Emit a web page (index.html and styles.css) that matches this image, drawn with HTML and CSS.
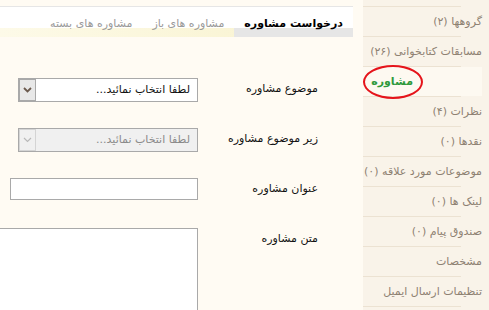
FILE: index.html
```html
<!DOCTYPE html>
<html lang="fa" dir="rtl">
<head>
<meta charset="utf-8">
<title>درخواست مشاوره</title>
<link rel="stylesheet" href="styles.css">
</head>
<body>
<div class="page">
  <aside class="sidebar">
    <div class="side-top"></div>
    <ul class="menu">
      <li class="item">گروهها (۲)</li>
      <li class="item">مسابقات کتابخوانی (۲۶)</li>
      <li class="item active"><span class="mark"></span>مشاوره</li>
      <li class="item">نظرات (۴)</li>
      <li class="item">نقدها (۰)</li>
      <li class="item">موضوعات مورد علاقه (۰)</li>
      <li class="item">لینک ها (۰)</li>
      <li class="item">صندوق پیام (۰)</li>
      <li class="item">مشخصات</li>
      <li class="item">تنظیمات ارسال ایمیل</li>
    </ul>
  </aside>
  <main class="main">
    <div class="tabs">
      <div class="tab active">درخواست مشاوره</div>
      <div class="tab">مشاوره های باز</div>
      <div class="tab">مشاوره های بسته</div>
    </div>
    <div class="form">
      <div class="row">
        <div class="label">موضوع مشاوره</div>
        <div class="select">
          <span class="select-text">لطفا انتخاب نمائید...</span>
          <span class="select-btn"><svg width="9" height="6" viewBox="0 0 9 6"><path d="M1 1 L4.5 4.5 L8 1" fill="none" stroke="currentColor" stroke-width="1.8"/></svg></span>
        </div>
      </div>
      <div class="row">
        <div class="label">زیر موضوع مشاوره</div>
        <div class="select disabled">
          <span class="select-text">لطفا انتخاب نمائید...</span>
          <span class="select-btn"><svg width="9" height="6" viewBox="0 0 9 6"><path d="M1 1 L4.5 4.5 L8 1" fill="none" stroke="currentColor" stroke-width="1.2"/></svg></span>
        </div>
      </div>
      <div class="row">
        <div class="label">عنوان مشاوره</div>
        <div class="input"></div>
      </div>
      <div class="row">
        <div class="label">متن مشاوره</div>
        <div class="textarea"></div>
      </div>
    </div>
  </main>
</div>
</body>
</html>
```
FILE: styles.css
```css
* { box-sizing: border-box; }
html, body {
  margin: 0;
  padding: 0;
}
body {
  width: 489px;
  height: 310px;
  overflow: hidden;
  background: #fffbf3;
  font-family: "DejaVu Sans", sans-serif;
  font-size: 11px;
  direction: rtl;
}
.page {
  display: flex;
  height: 310px;
}
.sidebar {
  width: 126px;
  flex: none;
  background: #f9f3e9;
  height: 310px;
}
.side-top {
  height: 7px;
  background: linear-gradient(#ece2d2, #ece2d2) left bottom / 98px 1px no-repeat;
}
.menu {
  list-style: none;
  margin: 0;
  padding: 0;
}
.item {
  height: 30px;
  line-height: 29px;
  padding-right: 7px;
  color: #8e8172;
  white-space: nowrap;
  background: linear-gradient(#ece2d2, #ece2d2) left bottom / 98px 1px no-repeat;
}
.item.active {
  position: relative;
  padding-right: 76px;
  color: #2f9a3c;
  font-weight: bold;
  background:
    linear-gradient(#ece2d2, #ece2d2) left bottom / 98px 1px no-repeat,
    linear-gradient(#fdf9f1, #fdf9f1) left top / 119px 29px no-repeat;
}
.mark {
  position: absolute;
  left: 0;
  top: -2px;
  width: 60px;
  height: 34px;
  border: 2.5px solid #e5141b;
  border-radius: 50%;
}
.main {
  flex: 1;
  min-width: 0;
  overflow: hidden;
}
.tabs {
  display: flex;
  margin-top: 6px;
  margin-right: 10px;
  height: 31px;
  border-top: 1px solid #e6e6e6;
  background: linear-gradient(to left, #f8f2cc, #fdfae8) left bottom / 100% 9px no-repeat, #fff;
}
.tab {
  padding: 9px 10px 0;
  line-height: 16px;
  color: #9a9a9a;
  white-space: nowrap;
}
.tab.active {
  color: #000;
  font-weight: bold;
  background: linear-gradient(#e6e6e6, #e6e6e6) left bottom / 100% 9px no-repeat, #fff;
}
.form {
  margin-top: 41px;
  padding-right: 45px;
}
.row {
  display: flex;
  align-items: flex-start;
  height: 50px;
}
.label {
  width: 110px;
  flex: none;
  margin-left: 10px;
  padding-top: 3px;
  line-height: 16px;
  color: #111;
}
.select {
  display: flex;
  width: 180px;
  height: 24px;
  border: 1px solid #a9a9a9;
  background: #fff;
}
.select-text {
  flex: 1;
  padding-right: 7px;
  line-height: 22px;
  color: #111;
  white-space: nowrap;
}
.select-btn {
  width: 17px;
  flex: none;
  display: flex;
  align-items: center;
  justify-content: center;
  background: #e8e8e8;
  border: 1px solid #a9a9a9;
  color: #6b5a4e;
}
.select.disabled {
  background: #f0f0f0;
}
.select.disabled .select-text {
  color: #8a8a8a;
}
.select.disabled .select-btn {
  background: #f0f0f0;
  border-color: #d4d4d4;
  color: #b9b9b9;
}
.input {
  width: 188px;
  height: 22px;
  border: 1px solid #a9a9a9;
  background: #fff;
}
.textarea {
  width: 220px;
  flex: none;
  height: 120px;
  border: 1px solid #a9a9a9;
  background: #fff;
}
```
